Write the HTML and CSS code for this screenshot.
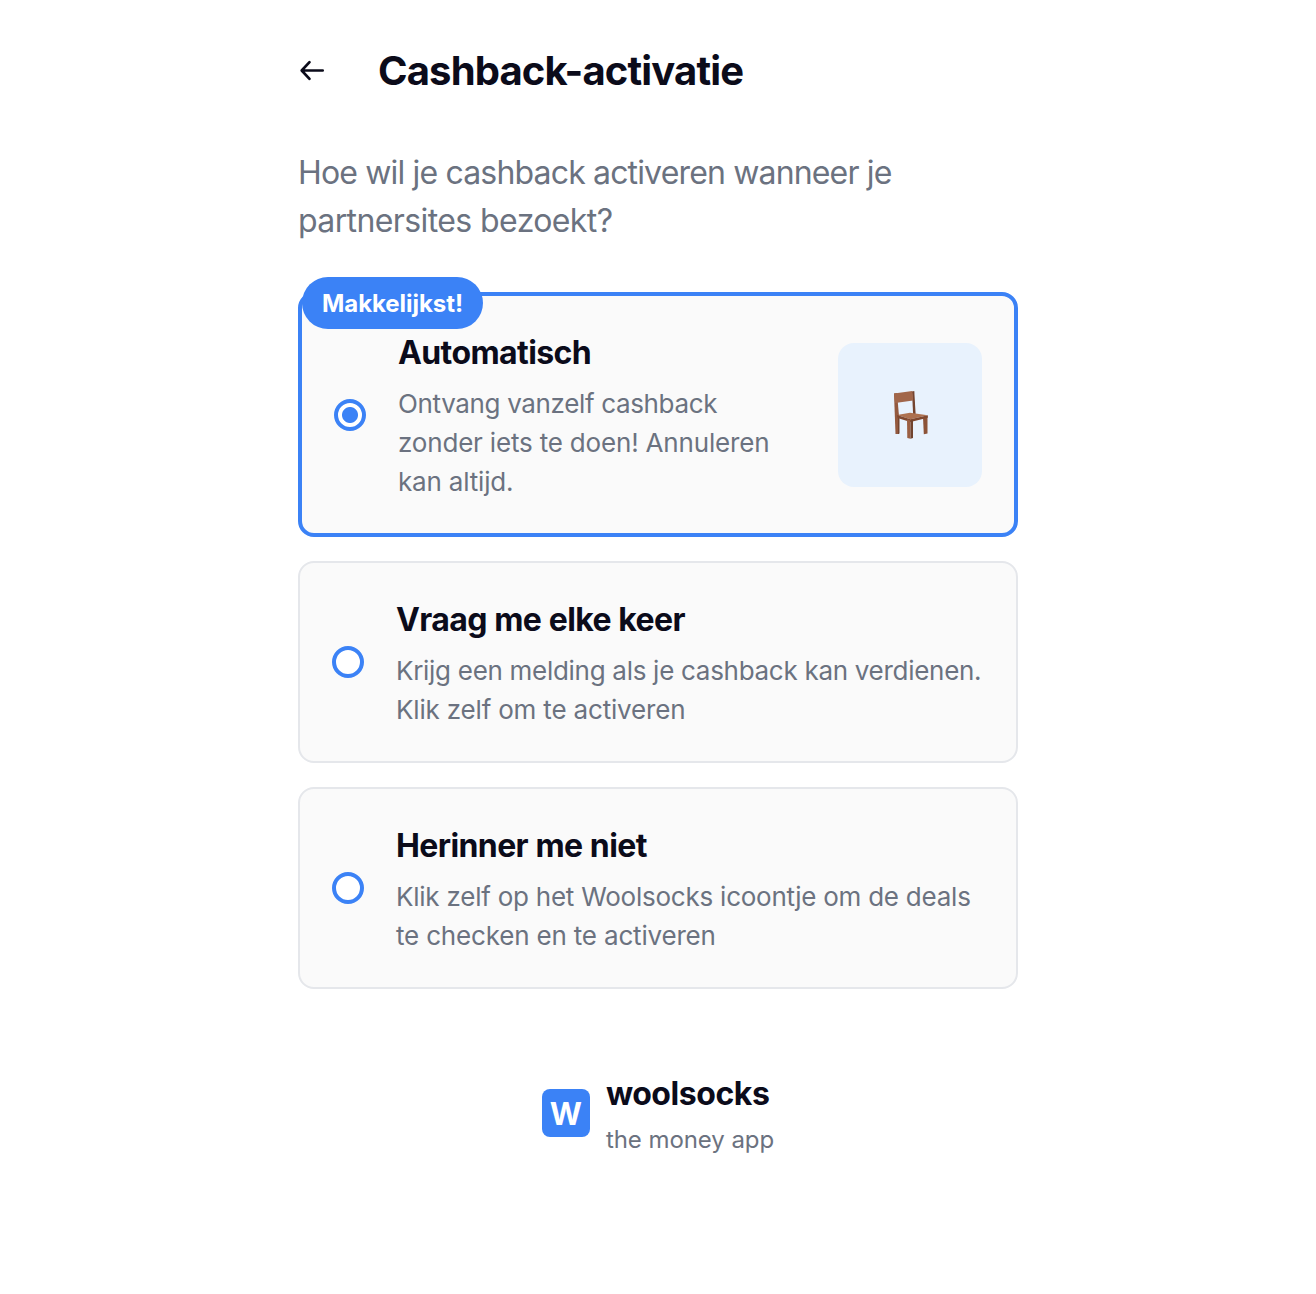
FILE: index.html
```html
<!DOCTYPE html>
<html lang="nl">
<head>
<meta charset="utf-8">
<title>Cashback-activatie</title>
<link rel="stylesheet" href="styles.css">
</head>
<body>
<main class="page">
  <header class="header">
    <svg class="back" viewBox="0 0 28 28" fill="none" stroke="currentColor" stroke-width="2.7" stroke-linecap="round" stroke-linejoin="round"><path d="M24.7 13.500H4M11.500 5.200L3.700 13.500L11.500 21.800"/></svg>
    <h1 class="title">Cashback-activatie</h1>
  </header>
  <p class="intro"><span class="intro-lead">Hoe wil je cashback activeren wanneer je</span><br>partnersites bezoekt?</p>
  <section class="options">
    <div class="card selected">
      <span class="badge">Makkelijkst!</span>
      <span class="radio checked"></span>
      <div class="copy">
        <h2 class="name">Automatisch</h2>
        <p class="desc"><span class="tighter">Ontvang vanzelf cashback</span><br>zonder iets te doen! Annuleren<br>kan altijd.</p>
      </div>
      <div class="thumb">
        <svg class="chair" viewBox="0 0 60 70">
          <path fill="#93593e" d="M14 13.500l3-.5 2 23v18h-3.500z"/>
          <path fill="#74442f" d="M18 36l1.500.5V53.500L18 54z"/>
          <path fill="#8c5338" d="M43 37l4.500-1v17.500l-3.700.7z"/>
          <path fill="#74442f" d="M32 11.500l2.300-.5 1.300 23h-2.500z"/>
          <path fill="#a1664a" d="M14 13.500L32.300 11l.8 9.500L15.200 23z"/>
          <path fill="#ad7150" d="M17 35l13-2.200 17.800 2.400-17.300 4z"/>
          <path fill="#80482f" d="M17 35l13.500 4.200 17.300-4v2.600L30.500 42 17.500 38z"/>
          <path fill="#9b5f42" d="M27 39.500l3.500 1v18.300l-3.200-.8z"/>
          <path fill="#70432e" d="M30.500 40.500l2.500-.7V58l-2.500.8z"/>
        </svg>
      </div>
    </div>
    <div class="card">
      <span class="radio"></span>
      <div class="copy">
        <h2 class="name">Vraag me elke keer</h2>
        <p class="desc"><span class="tight">Krijg een melding als je cashback kan verdienen.</span><br>Klik zelf om te activeren</p>
      </div>
    </div>
    <div class="card">
      <span class="radio"></span>
      <div class="copy">
        <h2 class="name">Herinner me niet</h2>
        <p class="desc"><span class="snug">Klik zelf op het Woolsocks icoontje om de deals</span><br>te checken en te activeren</p>
      </div>
    </div>
  </section>
  <footer class="footer">
    <span class="logo">W</span>
    <div class="brand">
      <div class="brand-name">woolsocks</div>
      <div class="tagline">the money app</div>
    </div>
  </footer>
</main>
</body>
</html>
```

FILE: styles.css
```css
* { box-sizing: border-box; margin: 0; padding: 0; }
body { background: #fff; color: #0b0b1a; font-family: Inter, sans-serif; }
.page { width: 720px; margin: 0 auto; padding-top: 40px; }
.header { display: flex; align-items: center; height: 62px; gap: 52px; }
.back { width: 28px; height: 28px; }
.title { font-size: 40px; line-height: 60px; font-weight: 700; letter-spacing: -0.85px; white-space: nowrap; }
.intro { margin-top: 47px; font-size: 32px; line-height: 48px; letter-spacing: -0.6px; color: #6b7280; white-space: nowrap; }
.intro-lead { letter-spacing: -0.84px; }
.options { display: flex; flex-direction: column; gap: 24px; margin-top: 47px; }
.card { position: relative; display: flex; align-items: center; gap: 32px; height: 202px; padding: 0 32px; border: 2px solid #e5e7eb; border-radius: 16px; background: #fafafa; }
.card.selected { height: 245px; border: 4px solid #3b82f6; }
.badge { position: absolute; left: 0; top: -19px; width: 181px; height: 52px; padding-top: 1px; border-radius: 26px; background: #3b82f6; color: #fff; font-size: 24px; line-height: 52px; font-weight: 700; letter-spacing: -0.05px; text-align: center; }
.radio { flex: none; width: 32px; height: 32px; border: 4px solid #3b82f6; border-radius: 50%; background: #fff; }
.radio.checked { background: radial-gradient(circle, #3b82f6 7.5px, #fff 8.5px); }
.copy { flex: 1; white-space: nowrap; }
.name { padding-top: 1px; font-size: 32px; line-height: 48px; font-weight: 650; letter-spacing: -0.6px; word-spacing: 0.4px; }
.desc { margin-top: 7px; font-size: 26px; line-height: 39px; letter-spacing: -0.18px; color: #6b7280; }
.snug { letter-spacing: -0.235px; }
.tight { letter-spacing: -0.29px; }
.tighter { letter-spacing: -0.35px; }
.thumb { flex: none; display: flex; align-items: center; justify-content: center; width: 144px; height: 144px; border-radius: 16px; background: #e8f2fd; }
.chair { width: 60px; height: 70px; }
.footer { display: flex; justify-content: center; align-items: center; gap: 16px; margin-top: 81px; }
.logo { width: 48px; height: 48px; margin-bottom: 2px; border-radius: 8px; background: #3b82f6; color: #fff; font-size: 31px; line-height: 50px; font-weight: 700; text-align: center; }
.brand-name { font-size: 32px; line-height: 48px; font-weight: 700; letter-spacing: -0.45px; }
.tagline { margin-top: 4px; font-size: 24px; line-height: 36px; letter-spacing: -0.06px; color: #6b7280; }
```
